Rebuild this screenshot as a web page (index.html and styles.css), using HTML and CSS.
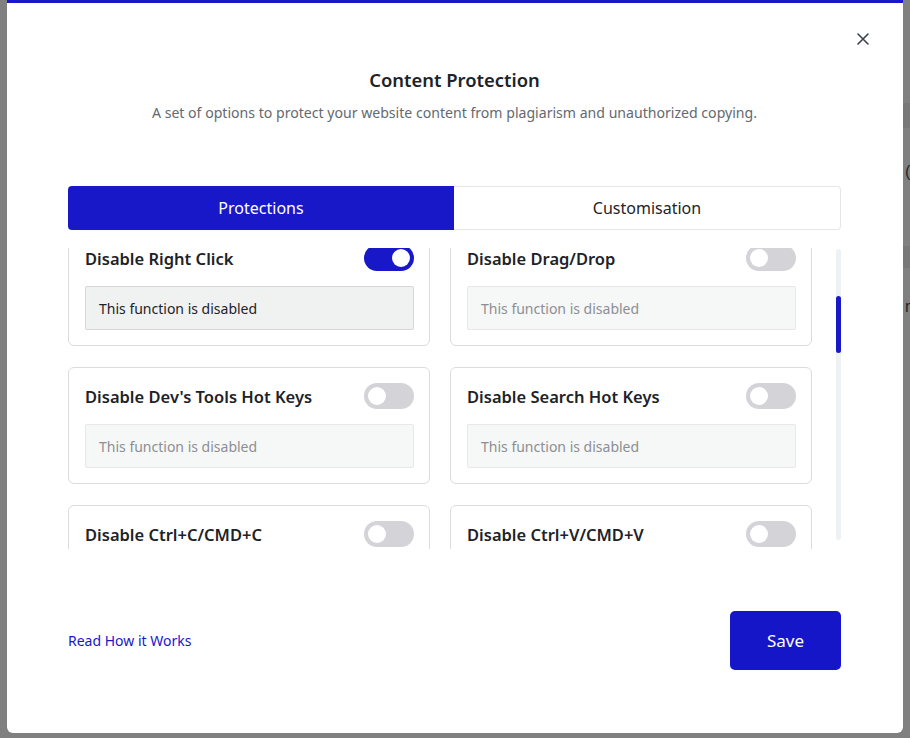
FILE: index.html
```html
<!DOCTYPE html>
<html lang="en">
<head>
<meta charset="utf-8">
<title>Content Protection</title>
<link rel="stylesheet" href="styles.css">
</head>
<body>
<div class="backdrop-left"></div>
<div class="modal">
  <button class="close" aria-label="Close">
    <svg width="12" height="12" viewBox="0 0 12 12"><path d="M1 1L11 11M11 1L1 11" stroke="#3c434a" stroke-width="1.6" fill="none" stroke-linecap="round"/></svg>
  </button>
  <header class="header">
    <h1 class="title">Content Protection</h1>
    <p class="subtitle">A set of options to protect your website content from plagiarism and unauthorized copying.</p>
  </header>
  <nav class="tabs">
    <div class="tab tab-active">Protections</div>
    <div class="tab">Customisation</div>
  </nav>
  <section class="scroll">
    <div class="viewport">
      <div class="grid">
        <div class="card">
          <div class="card-row"><span class="card-title">Disable Right Click</span><span class="toggle toggle-on"><span class="knob"></span></span></div>
          <div class="field field-active">This function is disabled</div>
        </div>
        <div class="card">
          <div class="card-row"><span class="card-title">Disable Drag/Drop</span><span class="toggle"><span class="knob"></span></span></div>
          <div class="field">This function is disabled</div>
        </div>
        <div class="card">
          <div class="card-row"><span class="card-title">Disable Dev's Tools Hot Keys</span><span class="toggle"><span class="knob"></span></span></div>
          <div class="field">This function is disabled</div>
        </div>
        <div class="card">
          <div class="card-row"><span class="card-title">Disable Search Hot Keys</span><span class="toggle"><span class="knob"></span></span></div>
          <div class="field">This function is disabled</div>
        </div>
        <div class="card">
          <div class="card-row"><span class="card-title">Disable Ctrl+C/CMD+C</span><span class="toggle"><span class="knob"></span></span></div>
          <div class="field">This function is disabled</div>
        </div>
        <div class="card">
          <div class="card-row"><span class="card-title">Disable Ctrl+V/CMD+V</span><span class="toggle"><span class="knob"></span></span></div>
          <div class="field">This function is disabled</div>
        </div>
      </div>
    </div>
    <div class="track"><div class="thumb"></div></div>
  </section>
  <footer class="footer">
    <a class="link" href="#">Read How it Works</a>
    <button class="save">Save</button>
  </footer>
</div>
<div class="backdrop-right">
  <div class="band band-1"></div>
  <div class="frag frag-1">(</div>
  <div class="band band-2"></div>
  <div class="frag frag-2">n</div>
</div>
</body>
</html>
```

FILE: styles.css
```css
* { box-sizing: border-box; }
html, body { margin: 0; height: 738px; overflow: hidden; }
body {
  display: flex;
  background: #808080;
  font-family: "Noto Sans", "Open Sans", sans-serif;
  color: #1d2327;
}
.backdrop-left { width: 7px; flex: none; }
.backdrop-right { width: 7px; flex: none; display: flex; flex-direction: column; overflow: hidden; }
.band { background: #787878; flex: none; }
.band-1 { margin-top: 103px; height: 25px; }
.band-2 { margin-top: 64px; height: 22px; }
.frag { font-family: "Liberation Sans", sans-serif; font-size: 16px; line-height: 20px; color: #1d2327; padding-left: 2px; flex: none; }
.frag-1 { margin-top: 34px; }
.frag-2 { margin-top: 29px; }

.modal {
  position: relative;
  width: 896px;
  height: 733px;
  flex: none;
  background: #fff;
  border-top: 3px solid #1818c9;
  border-radius: 0 0 6px 6px;
  padding: 0 62px 0 61px;
  display: flex;
  flex-direction: column;
}
.close {
  position: absolute;
  top: 28px;
  right: 32px;
  width: 16px;
  height: 16px;
  padding: 2px;
  border: 0;
  background: none;
  display: flex;
  align-items: center;
  justify-content: center;
}
.header { text-align: center; margin-top: 65px; }
.title { margin: 0; font-size: 18.4px; line-height: 24px; font-weight: 600; color: #1d2327; }
.subtitle { margin: 10px 0 0; font-size: 14.1px; line-height: 22px; color: #646970; }

.tabs { display: flex; margin-top: 62px; height: 44px; }
.tab {
  flex: 1;
  display: flex;
  align-items: center;
  justify-content: center;
  font-size: 16px;
  color: #1d2327;
  border: 1px solid #e6e6e8;
  border-left: 0;
  border-radius: 0 4px 4px 0;
}
.tab-active {
  background: #1818c9;
  color: #fff;
  border: 0;
  border-radius: 4px 0 0 4px;
}

.scroll { display: flex; margin-top: 18px; height: 301px; }
.viewport { width: 744px; overflow: hidden; }
.grid {
  display: grid;
  grid-template-columns: 362px 362px;
  column-gap: 20px;
  row-gap: 21px;
  margin-top: -19px;
}
.card {
  border: 1px solid #dcdcde;
  border-radius: 6px;
  padding: 15px 15px 15px 16px;
  display: flex;
  flex-direction: column;
  gap: 15px;
}
.card-row { display: flex; align-items: center; justify-content: space-between; height: 26px; }
.card-title { font-size: 16.5px; font-weight: 600; color: #1d2327; }
.toggle {
  width: 50px;
  height: 26px;
  border-radius: 13px;
  background: #d3d3d8;
  display: flex;
  align-items: center;
  padding: 0 4px;
}
.toggle-on { background: #1818c9; justify-content: flex-end; }
.knob { width: 18px; height: 18px; border-radius: 50%; background: #fff; }
.field {
  height: 44px;
  display: flex;
  align-items: center;
  padding-left: 13px;
  font-size: 14px;
  color: #8c8f94;
  background: #f6f7f7;
  border: 1px solid #e8e8ea;
  border-radius: 2px;
}
.field-active { color: #1d2327; background: #f0f2f2; border-color: #d6d7d9; }

.track {
  margin-left: 24px;
  margin-top: 1px;
  width: 5px;
  height: 291px;
  border-radius: 3px;
  background: #eef2f4;
}
.thumb { margin-top: 47px; height: 57px; border-radius: 3px; background: #1818c9; }

.footer {
  display: flex;
  align-items: center;
  justify-content: space-between;
  margin-top: 62px;
}
.link { font-size: 14px; color: #1818c9; text-decoration: none; }
.save {
  width: 111px;
  height: 59px;
  border: 0;
  border-radius: 5px;
  background: #1616c9;
  color: #fff;
  font-family: inherit;
  font-size: 17px;
}
```
